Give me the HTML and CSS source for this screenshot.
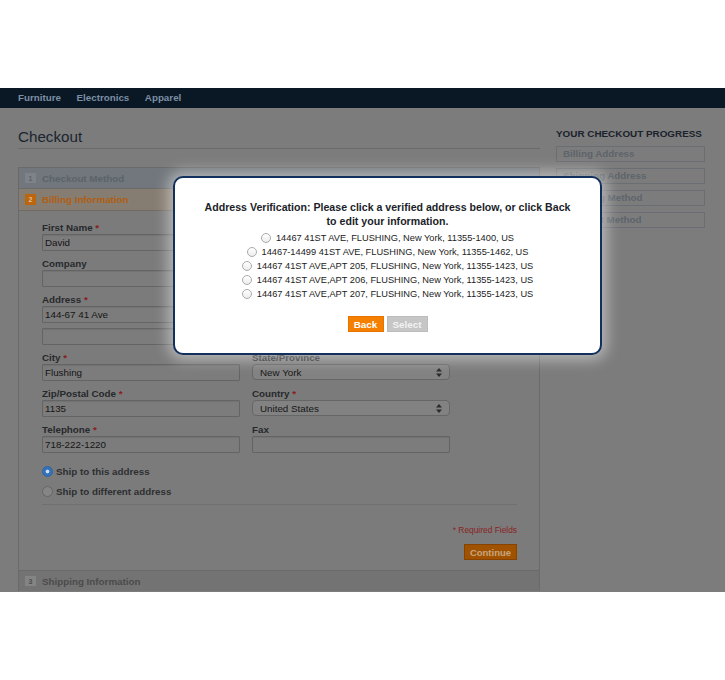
FILE: index.html
```html
<!DOCTYPE html>
<html lang="en">
<head>
<meta charset="utf-8">
<title>Checkout</title>
<link rel="stylesheet" href="styles.css">
</head>
<body>
<div class="screen">
  <nav class="topnav">
    <a href="#">Furniture</a>
    <a href="#">Electronics</a>
    <a href="#">Apparel</a>
  </nav>
  <div class="main">
    <div class="col-main">
      <h1 class="page-title">Checkout</h1>
      <ol class="opc">
        <li class="step">
          <div class="step-head"><span class="num">1</span>Checkout Method</div>
        </li>
        <li class="step active">
          <div class="step-head"><span class="num">2</span>Billing Information</div>
          <div class="step-body">
            <div class="field-row">
              <div class="field">
                <label>First Name <em>*</em></label>
                <input class="input" type="text" value="David">
              </div>
            </div>
            <div class="field-row">
              <div class="field wide">
                <label>Company</label>
                <input class="input" type="text" value="">
              </div>
            </div>
            <div class="field-row">
              <div class="field wide">
                <label>Address <em>*</em></label>
                <input class="input" type="text" value="144-67 41 Ave">
                <input class="input second" type="text" value="">
              </div>
            </div>
            <div class="field-row">
              <div class="field">
                <label>City <em>*</em></label>
                <input class="input" type="text" value="Flushing">
              </div>
              <div class="field">
                <label>State/Province</label>
                <div class="select"><span>New York</span><svg class="arrows" width="6" height="9" viewBox="0 0 6 9"><path d="M3 0L6 3.6H0Z M3 9L6 5.4H0Z"/></svg></div>
              </div>
            </div>
            <div class="field-row">
              <div class="field">
                <label>Zip/Postal Code <em>*</em></label>
                <input class="input" type="text" value="1135">
              </div>
              <div class="field">
                <label>Country <em>*</em></label>
                <div class="select"><span>United States</span><svg class="arrows" width="6" height="9" viewBox="0 0 6 9"><path d="M3 0L6 3.6H0Z M3 9L6 5.4H0Z"/></svg></div>
              </div>
            </div>
            <div class="field-row">
              <div class="field">
                <label>Telephone <em>*</em></label>
                <input class="input" type="text" value="718-222-1220">
              </div>
              <div class="field">
                <label>Fax</label>
                <input class="input" type="text" value="">
              </div>
            </div>
            <ul class="ship-options">
              <li><span class="radio checked"></span>Ship to this address</li>
              <li><span class="radio"></span>Ship to different address</li>
            </ul>
            <div class="actions">
              <p class="required">* Required Fields</p>
              <button class="btn-continue" type="button">Continue</button>
            </div>
          </div>
        </li>
        <li class="step">
          <div class="step-head"><span class="num">3</span>Shipping Information</div>
        </li>
      </ol>
    </div>
    <aside class="col-right">
      <h2 class="progress-title">YOUR CHECKOUT PROGRESS</h2>
      <ul class="progress">
        <li>Billing Address</li>
        <li>Shipping Address</li>
        <li>Shipping Method</li>
        <li>Payment Method</li>
      </ul>
    </aside>
  </div>

  <div class="modal">
    <p class="modal-title">Address Verification: Please click a verified address below, or click Back to edit your information.</p>
    <ul class="addr-list">
      <li><span class="mradio"></span>14467 41ST AVE, FLUSHING, New York, 11355-1400, US</li>
      <li><span class="mradio"></span>14467-14499 41ST AVE, FLUSHING, New York, 11355-1462, US</li>
      <li><span class="mradio"></span>14467 41ST AVE,APT 205, FLUSHING, New York, 11355-1423, US</li>
      <li><span class="mradio"></span>14467 41ST AVE,APT 206, FLUSHING, New York, 11355-1423, US</li>
      <li><span class="mradio"></span>14467 41ST AVE,APT 207, FLUSHING, New York, 11355-1423, US</li>
    </ul>
    <div class="modal-buttons">
      <button class="btn-back" type="button">Back</button>
      <button class="btn-select" type="button">Select</button>
    </div>
  </div>
</div>
</body>
</html>
```
FILE: styles.css
```css
* { box-sizing: border-box; }

body {
  margin: 0;
  background: #ffffff;
  font-family: "Liberation Sans", Arial, sans-serif;
}

.screen {
  position: relative;
  margin-top: 88px;
  height: 504px;
  overflow: hidden;
  background: #7c7c7c;
}

/* top navigation */
.topnav {
  height: 20px;
  background: #0a1724;
  display: flex;
  align-items: center;
  gap: 15.5px;
  padding-left: 18px;
}
.topnav a {
  color: #7b8fa4;
  font-weight: bold;
  font-size: 9.8px;
  line-height: 20px;
  text-decoration: none;
}

/* main layout */
.main {
  display: flex;
  gap: 16px;
  padding: 20px 0 0 18px;
}
.col-main { width: 522px; }
.col-right { width: 149px; }

.page-title {
  margin: 0 0 18px;
  padding-bottom: 2px;
  font-weight: normal;
  font-size: 15.2px;
  line-height: 18px;
  color: #1b2530;
  border-bottom: 1px solid #6b6b6b;
}

/* accordion */
.opc {
  list-style: none;
  margin: 0;
  padding: 0;
  border-left: 1px solid #6a6a6a;
  border-right: 1px solid #6a6a6a;
}
.step-head {
  height: 21px;
  border-top: 1px solid #6a6a6a;
  display: flex;
  align-items: center;
  gap: 6px;
  padding-left: 6px;
  font-weight: bold;
  font-size: 9.8px;
  color: #5c6369;
  background: #71777c;
}
.num {
  width: 11px;
  height: 10px;
  display: flex;
  align-items: center;
  justify-content: center;
  font-size: 7px;
  background: #7d8389;
  color: #5c636a;
}
.step.active .step-head {
  background: #867d72;
  color: #b05e12;
  border-bottom: 1px solid #706a64;
  height: 23px;
}
.step.active .num {
  background: #bb650e;
  color: #e1c09c;
  height: 11px;
}
.step:last-child .step-head {
  background: #737373;
  color: #4b4b4b;
}
.step:last-child .num {
  background: #848484;
  color: #4e4e4e;
}

.step-body {
  padding: 11px 22px 10px 23px;
  background: #7b7b7b;
}

/* form fields */
.field-row {
  display: flex;
  gap: 12px;
  margin-bottom: 7px;
}
.field { width: 198px; }
.field.wide { width: 408px; }

label {
  display: block;
  font-weight: bold;
  font-size: 9.8px;
  line-height: 12px;
  color: #26292c;
}
label em {
  font-style: normal;
  color: #8b1d1d;
}

.input {
  display: block;
  width: 100%;
  height: 17px;
  margin: 0;
  padding: 0 0 0 2px;
  border: 1px solid #646464;
  border-radius: 1px;
  background: #7c7c7c;
  box-shadow: inset 0 1px 1px rgba(0, 0, 0, 0.08);
  font: 9.8px "Liberation Sans", Arial, sans-serif;
  color: #151515;
  outline: none;
}
.input.second { margin-top: 5px; }

.select {
  height: 16px;
  display: flex;
  align-items: center;
  justify-content: space-between;
  padding: 0 7px;
  border: 1px solid #666666;
  border-radius: 4px;
  background: #828282;
  font-size: 9.8px;
  color: #161616;
}
.arrows { fill: #2a2a2a; }

/* ship options */
.ship-options {
  list-style: none;
  margin: 8px 0 0;
  padding: 0;
}
.ship-options li {
  height: 20px;
  display: flex;
  align-items: center;
  gap: 3px;
  font-weight: bold;
  font-size: 9.8px;
  color: #2d2f31;
}
.radio {
  width: 11px;
  height: 11px;
  border-radius: 50%;
  border: 1px solid #666666;
  background: #858585;
}
.radio.checked {
  border-color: #2d64a6;
  background: radial-gradient(circle, #d0dcea 0 1.6px, #3472b9 2.2px);
}

.actions {
  margin-top: 3px;
  border-top: 1px solid #707070;
  text-align: right;
}
.required {
  margin: 19px 0 0;
  font-size: 8.4px;
  line-height: 12px;
  color: #8a2424;
}
.btn-continue {
  margin-top: 8px;
  width: 53px;
  height: 16px;
  padding: 0;
  border: 1px solid #874400;
  background: #a05200;
  font: bold 9.5px "Liberation Sans", Arial, sans-serif;
  color: #c7a680;
}

/* progress sidebar */
.progress-title {
  margin: 0 0 6px;
  font-size: 9.9px;
  line-height: 12px;
  font-weight: bold;
  color: #1a222c;
}
.progress {
  list-style: none;
  margin: 0;
  padding: 0;
}
.progress li {
  height: 16px;
  margin-bottom: 6px;
  padding-left: 6px;
  border: 1px solid #6a6e72;
  font-weight: bold;
  font-size: 9.8px;
  line-height: 14px;
  color: #5d646b;
}

/* address verification modal */
.modal {
  position: absolute;
  left: 173px;
  top: 88px;
  width: 429px;
  height: 179px;
  padding: 22px 10px 0;
  background: #ffffff;
  border: 2px solid #12305e;
  border-radius: 10px;
  box-shadow: 0 0 14px 5px rgba(255, 255, 255, 0.45);
  text-align: center;
}
.modal-title {
  max-width: 377px;
  margin: 0 auto 3px;
  font-size: 10.6px;
  line-height: 14px;
  font-weight: bold;
  color: #1b1e28;
}
.addr-list {
  list-style: none;
  margin: 0;
  padding: 0;
}
.addr-list li {
  height: 14px;
  line-height: 14px;
  font-size: 9.25px;
  color: #222222;
  white-space: nowrap;
}
.mradio {
  display: inline-block;
  width: 10px;
  height: 10px;
  margin-right: 5px;
  vertical-align: -2px;
  border-radius: 50%;
  border: 1px solid #ababab;
  background: linear-gradient(#ffffff, #ececec);
}
.modal-buttons {
  margin-top: 15px;
  display: flex;
  justify-content: center;
  gap: 3px;
}
.modal-buttons button {
  height: 16px;
  padding: 0;
  font: bold 9.8px "Liberation Sans", Arial, sans-serif;
  color: #ffffff;
}
.btn-back {
  width: 36px;
  background: #f47f00;
  border: 1px solid #e57400;
}
.btn-select {
  width: 41px;
  background: #c6c6c6;
  border: 1px solid #bcbcbc;
  color: #f2f2f2 !important;
}
```
